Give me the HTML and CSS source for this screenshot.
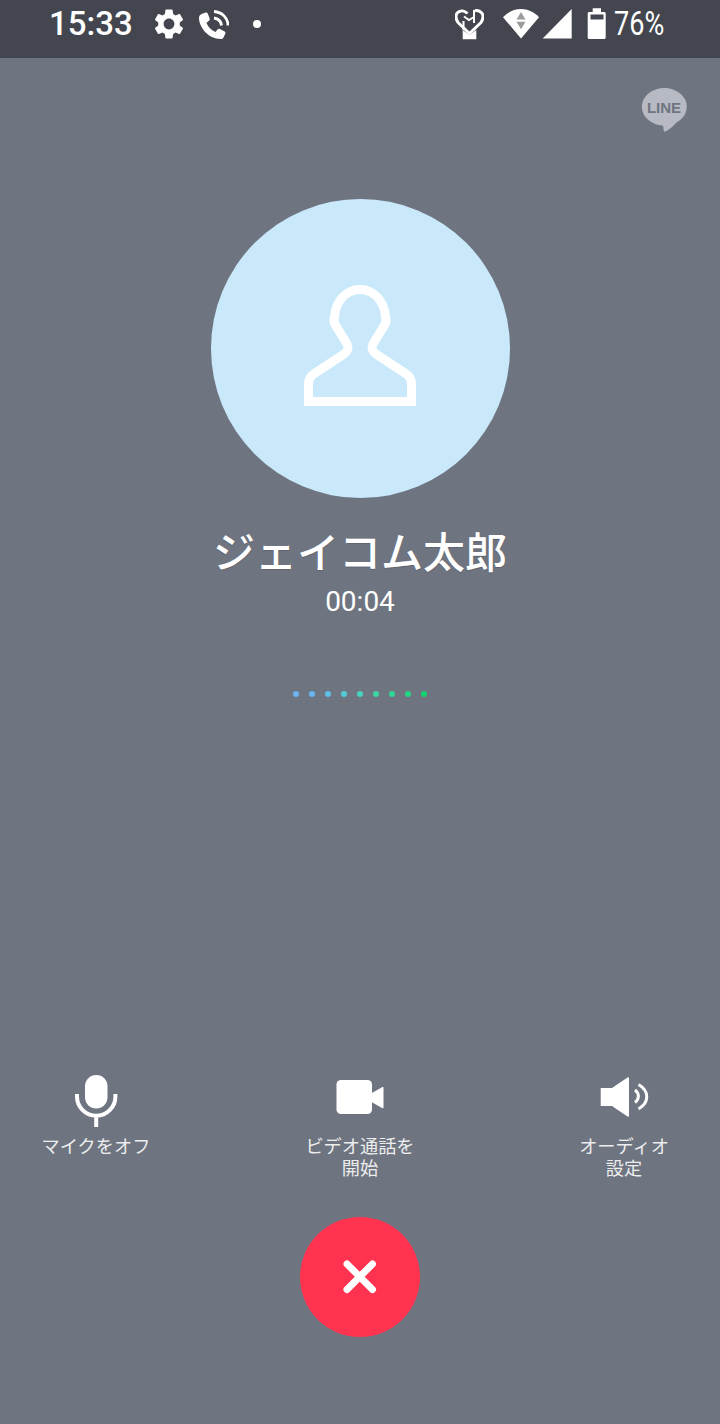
FILE: index.html
```html
<!DOCTYPE html>
<html lang="ja">
<head>
<meta charset="utf-8">
<title>LINE 通話</title>
<link rel="stylesheet" href="styles.css">
</head>
<body>
<div class="screen">
  <header class="status">
    <span class="clock">15:33</span>
    <svg class="ic-gear" viewBox="2 2 20 20"><path fill="#fff" d="M19.14 12.94c.04-.3.06-.61.06-.94 0-.32-.02-.64-.07-.94l2.03-1.58c.18-.14.23-.41.12-.61l-1.92-3.32c-.12-.22-.37-.29-.59-.22l-2.39.96c-.5-.38-1.03-.7-1.62-.94l-.36-2.54c-.04-.24-.24-.41-.48-.41h-3.84c-.24 0-.43.17-.47.41l-.36 2.54c-.59.24-1.13.57-1.62.94l-2.39-.96c-.22-.08-.47 0-.59.22L2.74 8.87c-.12.21-.08.47.12.61l2.03 1.58c-.05.3-.09.63-.09.94s.02.64.07.94l-2.03 1.58c-.18.14-.23.41-.12.61l1.92 3.32c.12.22.37.29.59.22l2.39-.96c.5.38 1.03.7 1.62.94l.36 2.54c.05.24.24.41.48.41h3.84c.24 0 .44-.17.47-.41l.36-2.54c.59-.24 1.13-.56 1.62-.94l2.39.96c.22.08.47 0 .59-.22l1.92-3.32c.12-.22.07-.47-.12-.61l-2.01-1.58zM12 15.6c-1.98 0-3.6-1.62-3.6-3.6s1.62-3.6 3.6-3.6 3.6 1.62 3.6 3.6-1.62 3.6-3.6 3.6z"/></svg>
    <svg class="ic-call" viewBox="199 9 30 30"><path fill="#fff" d="M201.500 14l4-1.500c1-.3 1.800 0 2.200 1l2 5c.3 1 0 1.700-.7 2.300l-2.500 2c1 3.500 5.500 8 9 9.200l2-2.500c.7-.8 1.500-1 2.400-.5l4.800 2.600c.8.5 1 1.300.6 2.100l-1.800 3.800c-.6 1-1.500 1.500-2.700 1.500c-12.800 0-21.800-12-21.800-21c0-1.800 1-3.200 2.500-4z"/><path fill="none" stroke="#fff" stroke-width="2.800" d="M214 11.500c8 .5 14 6.500 14 14M214 18c4 .5 7 3.500 7.500 7.500"/></svg>
    <span class="notif-dot"></span>
    <span class="status-right">
      <svg class="ic-heart" viewBox="455 9 29 31"><path fill="none" stroke="#fff" stroke-width="3" stroke-linejoin="round" d="M467.500 13.500c-3-3-7-3.500-10-.8c-2.500 2.500-1.500 7 .5 9.800l11.500 11l11.500-11c2-2.800 3-7.300 .5-9.800c-2-2-4.500-2.500-6.500-2"/><path fill="none" stroke="#fff" stroke-width="2" d="M464 16.500l5 3.500l5-3M474 10v13M463.500 21v9"/><path fill="#fff" d="M462.700 30l6.800 5l6.800-5v9.300h-13.600z"/></svg>
      <svg class="ic-wifi" viewBox="503 9 36 30"><path fill="#fff" d="M503 17.200c5-5.200 11-8.200 18-8.200s13 3 18 8.200l-18 21.300z"/><path fill="#9c9c9c" d="M521 12l4.500 7.500h-9zM516.500 21.800h9l-4.500 7.500z"/></svg>
      <svg class="ic-signal" viewBox="542 9 30 30"><path fill="#fff" d="M542.700 38.400l29-29.400v29.400z"/></svg>
      <svg class="ic-battery" viewBox="587 8 20 32"><path fill="#fff" d="M592.700 8.300h8.300v3.700h3.200c.9 0 1.500.6 1.500 1.500v24c0 .9-.6 1.500-1.500 1.500h-15c-.9 0-1.500-.6-1.500-1.500v-24c0-.9.6-1.500 1.500-1.500h3.500z"/><rect fill="#43464f" x="590.500" y="14.500" width="13" height="5"/></svg>
      <span class="percent">76%</span>
    </span>
  </header>

  <main class="call">
    <svg class="line-logo" viewBox="641 88 46 44">
      <ellipse fill="#b7bac2" cx="664.300" cy="106.800" rx="22.500" ry="18.800"/>
      <path fill="#b7bac2" d="M660.500 124c2.500 1 3 2.500 3 5c0 2.500 1 3.200 3 2c4-2.500 8-5.500 11-10z"/>
      <text class="line-word" x="664" y="112.600" text-anchor="middle">LINE</text>
    </svg>

    <div class="avatar">
      <svg class="avatar-figure" viewBox="211 199 299 299"><path fill="none" stroke="#fff" stroke-width="9" stroke-linejoin="miter" d="M308.500 401.500v-17.500c0-5 2-8 6-10.500l29.500-19.500c4-3 5-6 3-10l-11-18c-2.500-3-2.500-6-1.500-9c1-15 11-27.500 25.500-27.500s24.500 12.500 25.500 27.500c1 3 1 6-1.500 9l-11 18c-2 4-1 7 3 10l29.500 19.500c4 2.500 6 5.500 6 10.500v17.500z"/></svg>
    </div>

    <h1 class="name">ジェイコム太郎</h1>
    <div class="duration">00:04</div>

    <div class="dots">
      <span class="dot dot-1"></span>
      <span class="dot dot-2"></span>
      <span class="dot dot-3"></span>
      <span class="dot dot-4"></span>
      <span class="dot dot-5"></span>
      <span class="dot dot-6"></span>
      <span class="dot dot-7"></span>
      <span class="dot dot-8"></span>
      <span class="dot dot-9"></span>
    </div>

    <div class="controls">
      <div class="control">
        <svg class="control-icon" viewBox="69 1075 54 54"><rect fill="#fff" x="85" y="1075" width="22.500" height="33.500" rx="11.250"/><path fill="none" stroke="#fff" stroke-width="4" d="M77 1094v2.500a19 19 0 0 0 38.400 0v-2.500M96.200 1115v12"/></svg>
        <span class="control-label">マイクをオフ</span>
      </div>
      <div class="control">
        <svg class="control-icon" viewBox="333 1075 54 54"><rect fill="#fff" x="336.500" y="1080" width="35.500" height="34" rx="4.500"/><path fill="#fff" d="M371 1093.500l11.500-6.500c.6-.3 1 0 1 .6v20c0 .6-.4 .9-1 .6l-11.500-6.500z"/></svg>
        <span class="control-label">ビデオ通話を<br>開始</span>
      </div>
      <div class="control">
        <svg class="control-icon" viewBox="597 1075 54 54"><path fill="#fff" d="M600.700 1088h11.300l15.500-10.500c.8-.6 1.500-.2 1.500.8v37.400c0 1-.7 1.400-1.500 .8l-15.500-10.500h-11.300z"/><path fill="none" stroke="#fff" stroke-width="3" d="M635 1090c4.500 3.500 4.500 9 0 12.500M638.500 1084.500c11 6.500 11 18 0 24.500"/></svg>
        <span class="control-label">オーディオ<br>設定</span>
      </div>
    </div>

    <button class="hangup" type="button" aria-label="終了">
      <svg class="hangup-x" viewBox="0 0 36 36"><path fill="none" stroke="#fff" stroke-width="7" stroke-linecap="round" d="M5 5l25.500 25.500M30.500 5L5 30.500"/></svg>
    </button>
  </main>
</div>
</body>
</html>
```

FILE: styles.css
```css
* { box-sizing: border-box; }

html, body {
  margin: 0;
  padding: 0;
}

body {
  font-family: Roboto, "Noto Sans CJK JP", sans-serif;
  color: #fff;
  background: #6e7480;
}

.screen {
  width: 720px;
  height: 1424px;
  display: flex;
  flex-direction: column;
  overflow: hidden;
  background: #6e7480;
}

/* status bar */
.status {
  height: 58px;
  flex: none;
  display: flex;
  align-items: center;
  padding: 0 56px 10px 49px;
  background: #43464f;
}

.clock {
  width: 105px;
  font-size: 33px;
  font-weight: 500;
  line-height: 48px;
}

.ic-gear { width: 30px; height: 30px; margin-right: 15px; }
.ic-call { width: 30px; height: 30px; margin-right: 24px; }

.notif-dot {
  width: 8px;
  height: 8px;
  border-radius: 50%;
  background: #fff;
}

.status-right {
  margin-left: auto;
  display: flex;
  align-items: center;
}

.ic-heart { width: 29px; height: 31px; margin-right: 19px; }
.ic-wifi { width: 36px; height: 30px; margin-right: 3px; }
.ic-signal { width: 30px; height: 30px; margin-right: 15px; }
.ic-battery { width: 20px; height: 32px; margin-right: 7px; }

.percent {
  display: inline-block;
  width: 50px;
  font-size: 33px;
  line-height: 48px;
  white-space: nowrap;
  transform: scaleX(0.82);
  transform-origin: left center;
}

/* call body */
.call {
  flex: 1;
  display: flex;
  flex-direction: column;
  align-items: center;
  min-height: 0;
}

.line-logo {
  width: 46px;
  height: 44px;
  margin-top: 30px;
  align-self: flex-end;
  margin-right: 33px;
}

.line-word {
  font-family: "Liberation Sans", sans-serif;
  font-size: 15px;
  font-weight: 700;
  fill: #6e7480;
}

.avatar {
  width: 299px;
  height: 299px;
  margin-top: 67px;
  flex: none;
  border-radius: 50%;
  background: #c9e9fb;
  position: relative;
  left: 0.5px;
}

.avatar-figure {
  display: block;
  width: 100%;
  height: 100%;
}

.name {
  margin: 22px 0 0;
  font-family: "Noto Sans CJK JP", sans-serif;
  font-size: 42px;
  font-weight: 500;
  line-height: 60px;
  text-shadow: 0 1px 1px rgba(0, 0, 0, 0.15);
}

.duration {
  font-size: 28px;
  line-height: 36px;
  margin-top: 4px;
}

.dots {
  display: flex;
  gap: 10px;
  margin-top: 71px;
}

.dot {
  width: 6px;
  height: 6px;
  border-radius: 50%;
}

.dot-1 { background: #6fb3f2; }
.dot-2 { background: #68b6ee; }
.dot-3 { background: #5fc0e6; }
.dot-4 { background: #52cbd8; }
.dot-5 { background: #48d2c0; }
.dot-6 { background: #3dd5a6; }
.dot-7 { background: #30d594; }
.dot-8 { background: #24d482; }
.dot-9 { background: #14d06e; }

.controls {
  width: 100%;
  height: 105px;
  flex: none;
  margin-top: auto;
  display: flex;
  justify-content: space-between;
  align-items: flex-start;
}

.control {
  width: 192px;
  display: flex;
  flex-direction: column;
  align-items: center;
}

.control-icon {
  width: 54px;
  height: 54px;
  flex: none;
  display: block;
}

.control-label {
  display: block;
  margin-top: 7px;
  font-family: Roboto, "Noto Sans CJK JP", sans-serif;
  font-size: 18.200px;
  line-height: 21.500px;
  text-align: center;
  color: #eceded;
}

.hangup {
  width: 120px;
  height: 120px;
  flex: none;
  margin: 37px 0 87px;
  padding: 0;
  border: 0;
  border-radius: 50%;
  background: #ff334f;
  display: flex;
  align-items: center;
  justify-content: center;
}

.hangup-x {
  width: 36px;
  height: 36px;
}
```
